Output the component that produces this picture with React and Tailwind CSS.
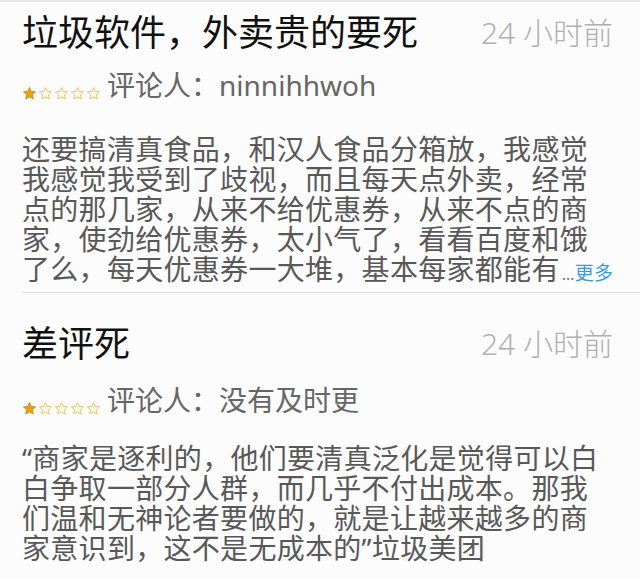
import React from "react";

const FONT = "font-['Noto_Sans','Noto_Sans_CJK_SC',sans-serif]";

function Star({ filled }) {
  return (
    <svg width="15" height="15" viewBox="0 0 24 24" className="shrink-0">
      <path
        d="M12 2.5l2.9 6.2 6.7.7-5 4.6 1.4 6.6L12 17.3 6 20.6l1.4-6.6-5-4.6 6.7-.7z"
        fill={filled ? "#e5a01c" : "#fffbe6"}
        stroke={filled ? "#d48f10" : "#e2c46a"}
        strokeWidth="1.6"
        strokeLinejoin="round"
      />
    </svg>
  );
}

function Stars() {
  return (
    <div className="flex items-center gap-[1px] mb-[2px]">
      <Star filled />
      <Star />
      <Star />
      <Star />
      <Star />
    </div>
  );
}

function Review({ title, reviewer, lines, more, first }) {
  return (
    <div className={first ? "pl-[22px] pr-[27px] pt-[9px]" : "pl-[22px] pr-[27px] pt-[29px]"}>
      <div className="flex items-center justify-between h-[44px]">
        <span className="text-[36px] leading-[44px] text-[#111]">{title}</span>
        <span className="text-[30px] leading-[44px] text-[#b0b0b0] font-light">24 小时前</span>
      </div>
      <div className={first ? "flex items-end mt-[12px] h-[36px]" : "flex items-end mt-[16px] h-[36px]"}>
        <Stars />
        <span className="ml-[6px] text-[28px] leading-[36px] text-[#666]">评论人：{reviewer}</span>
      </div>
      <div className={first ? "mt-[31px] text-[28px] leading-[30px] text-[#585858] tracking-[0.3px]" : "mt-[25px] text-[28px] leading-[30px] text-[#585858] tracking-[0.3px]"}>
        {lines.map((l, i) => (
          <div key={i} className="whitespace-nowrap h-[30px]">
            {l}
            {more && i === lines.length - 1 && (
              <>
                <span className="text-[16px] leading-[30px] text-[#777] ml-[2px]">…</span>
                <span className="text-[19px] leading-[30px] text-[#3a9bd6]">更多</span>
              </>
            )}
          </div>
        ))}
      </div>
    </div>
  );
}

export default function App() {
  return (
    <div className={`w-[640px] h-[579px] overflow-hidden bg-[#fcfcfc] border-t-2 border-[#e8e8e8] ${FONT}`}>
      <Review
        first
        title="垃圾软件，外卖贵的要死"
        reviewer="ninnihhwoh"
        more
        lines={[
          "还要搞清真食品，和汉人食品分箱放，我感觉",
          "我感觉我受到了歧视，而且每天点外卖，经常",
          "点的那几家，从来不给优惠券，从来不点的商",
          "家，使劲给优惠券，太小气了，看看百度和饿",
          "了么，每天优惠券一大堆，基本每家都能有",
        ]}
      />
      <div className="ml-[22px] mt-[8px] border-t border-[#dedede]" />
      <Review
        title="差评死"
        reviewer="没有及时更"
        lines={[
          "“商家是逐利的，他们要清真泛化是觉得可以白",
          "白争取一部分人群，而几乎不付出成本。那我",
          "们温和无神论者要做的，就是让越来越多的商",
          "家意识到，这不是无成本的”垃圾美团",
        ]}
      />
    </div>
  );
}
